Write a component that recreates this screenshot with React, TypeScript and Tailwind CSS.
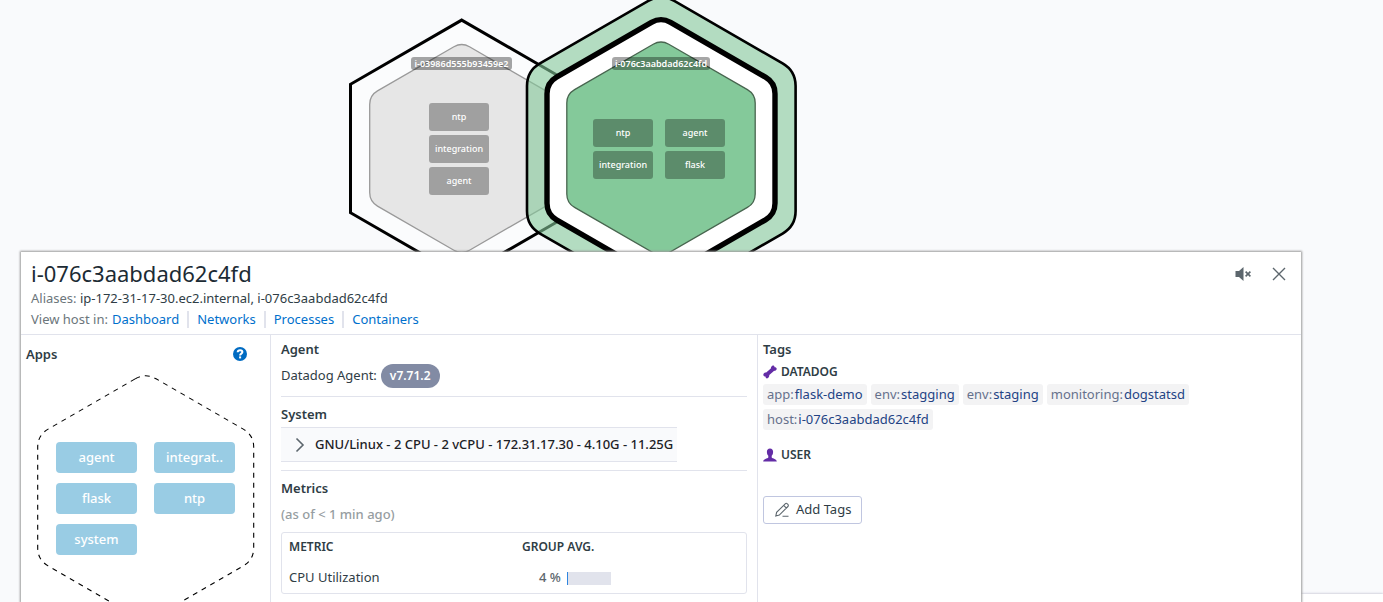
import type { ReactNode } from "react";

type Point = [number, number];

function roundedHex(cx: number, cy: number, half: number, round: number): string {
  const r = half / Math.cos(Math.PI / 6);
  const pts: Point[] = [0, 1, 2, 3, 4, 5].map((i) => {
    const a = -Math.PI / 2 + (i * Math.PI) / 3;
    return [cx + r * Math.cos(a), cy + r * Math.sin(a)];
  });
  const towards = (a: Point, b: Point): Point => {
    const t = round / r;
    return [a[0] + (b[0] - a[0]) * t, a[1] + (b[1] - a[1]) * t];
  };
  return (
    pts
      .map((p, i) => {
        const from = towards(p, pts[(i + 5) % 6]);
        const to = towards(p, pts[(i + 1) % 6]);
        return `${i === 0 ? "M" : "L"}${from[0]} ${from[1]} Q${p[0]} ${p[1]} ${to[0]} ${to[1]}`;
      })
      .join(" ") + " Z"
  );
}

function HostLabel({ children }: { children: ReactNode }) {
  return (
    <span className="rounded-[3px] bg-black/35 px-[3px] text-[9px] leading-[13px] font-semibold whitespace-nowrap text-white">
      {children}
    </span>
  );
}

function HostApp({ children }: { children: ReactNode }) {
  return (
    <button
      type="button"
      className="flex h-[28px] w-[60px] items-center justify-center rounded-[3px] bg-black/30 pb-[2px] text-[9px] leading-none font-medium text-white"
    >
      {children}
    </button>
  );
}

function HostMap() {
  return (
    <section aria-label="Host map" className="relative h-[252px] shrink-0 overflow-hidden">
      <svg className="absolute top-0 left-0" width="900" height="252" aria-hidden="true">
        <path d={roundedHex(461.7, 148.5, 111.2, 0)} fill="#fff" fillOpacity="0.35" stroke="#000" strokeWidth="3" />
        <path d={roundedHex(461.7, 148.5, 92, 9)} fill="#e6e6e6" stroke="#999" strokeWidth="1.3" />
        <path d={roundedHex(661.3, 148.5, 134.3, 15)} fill="#84c899" fillOpacity="0.6" />
        <path d={roundedHex(661.3, 148.5, 134.3, 15)} fill="none" stroke="#000" strokeWidth="2.6" />
        <path d={roundedHex(661, 148.5, 114, 11)} fill="#fff" stroke="#000" strokeWidth="5.4" />
        <path d={roundedHex(661, 148.5, 94.2, 9)} fill="#84c99a" stroke="#48654f" strokeWidth="1.3" />
      </svg>
      <div className="absolute top-[57px] left-[411px] flex w-[101px] justify-center">
        <HostLabel>i-03986d555b93459e2</HostLabel>
      </div>
      <div className="absolute top-[103px] left-[429px] grid gap-1">
        <HostApp>ntp</HostApp>
        <HostApp>integration</HostApp>
        <HostApp>agent</HostApp>
      </div>
      <div className="absolute top-[57px] left-[611px] flex w-[100px] justify-center">
        <HostLabel>i-076c3aabdad62c4fd</HostLabel>
      </div>
      <div className="absolute top-[119px] left-[593px] grid grid-cols-2 gap-x-3 gap-y-1">
        <HostApp>ntp</HostApp>
        <HostApp>agent</HostApp>
        <HostApp>integration</HostApp>
        <HostApp>flask</HostApp>
      </div>
    </section>
  );
}

function PanelHeader() {
  const links = ["Dashboard", "Networks", "Processes", "Containers"];
  return (
    <header className="flex items-start justify-between border-b border-[#e1e3ec] pt-[5px] pr-[14px] pb-[6px] pl-[10px]">
      <div>
        <h1 className="text-[22px] leading-[32px] text-[#1c2b34]">i-076c3aabdad62c4fd</h1>
        <p className="leading-[18px] text-[#2f3d45]">
          <span className="text-[#6c767b]">Aliases:</span> ip-172-31-17-30.ec2.internal, i-076c3aabdad62c4fd
        </p>
        <nav aria-label="View host in" className="mt-[3px] flex items-center leading-[18px]">
          <span className="mr-[4px] text-[#6c767b]">View host in:</span>
          {links.map((name, i) => (
            <span key={name} className="flex items-center">
              {i > 0 && <span className="mx-[8px] h-[17px] w-[2px] bg-[#e1e3ec]" />}
              <a href="#" className="text-[#0070cc]">
                {name}
              </a>
            </span>
          ))}
        </nav>
      </div>
      <div className="mt-[9px] flex items-center gap-[19px] text-[#5c666d]">
        <button type="button" aria-label="Mute host">
          <svg width="17" height="16" viewBox="0 0 17 16" fill="currentColor">
            <path d="M0.5 5H4L8.5 1V15L4 11H0.5Z" />
            <path d="M10.6 5.6L15.4 10.4M15.4 5.6L10.6 10.4" stroke="currentColor" strokeWidth="1.6" />
          </svg>
        </button>
        <button type="button" aria-label="Close panel">
          <svg width="16" height="16" viewBox="0 0 16 16" fill="none" stroke="currentColor" strokeWidth="1.4">
            <path d="M2 2L14 14M14 2L2 14" />
          </svg>
        </button>
      </div>
    </header>
  );
}

function AppsColumn() {
  const apps = ["agent", "integrat..", "flask", "ntp", "system"];
  return (
    <section className="w-[250px] shrink-0 border-r border-[#e1e3ec] pt-[9px]">
      <div className="flex items-center justify-between pr-[23px] pl-[5px]">
        <h2 className="leading-5 font-semibold">Apps</h2>
        <button
          type="button"
          aria-label="Help"
          className="flex size-[14px] items-center justify-center rounded-full bg-[#006bc2] text-white"
        >
          <svg width="14" height="14" viewBox="0 0 14 14" fill="none">
            <path
              d="M4.7 5.3C4.7 3.9 5.7 3.2 7.1 3.2C8.5 3.2 9.4 4 9.4 5.1C9.4 6.7 7.1 6.6 7.1 8.5"
              stroke="currentColor"
              strokeWidth="2"
            />
            <rect x="6.1" y="9.4" width="2" height="2" fill="currentColor" />
          </svg>
        </button>
      </div>
      <div className="mt-[6px] grid">
        <svg className="[grid-area:1/1]" width="249" height="256" aria-hidden="true">
          <path
            d={roundedHex(124.7, 127.5, 108, 12)}
            fill="none"
            stroke="#000"
            strokeWidth="1.1"
            strokeDasharray="5 5"
          />
        </svg>
        <div className="mt-[72px] ml-[35px] grid grid-cols-[81px_81px] content-start gap-x-[17px] gap-y-[10px] [grid-area:1/1]">
          {apps.map((app) => (
            <button
              key={app}
              type="button"
              className="h-[31px] rounded-[4px] bg-[#99cce4] pb-[2px] text-center leading-5 font-medium text-white"
            >
              {app}
            </button>
          ))}
        </div>
      </div>
    </section>
  );
}

function DetailsColumn() {
  return (
    <div className="w-[487px] shrink-0 border-r border-[#e1e3ec] px-[10px] pt-[4px]">
      <section className="border-b border-[#e1e3ec] pb-[8px]">
        <h2 className="leading-5 font-semibold">Agent</h2>
        <p className="mt-[5px] flex items-center gap-[4px]">
          Datadog Agent:
          <span className="rounded-full bg-[#828ba4] px-[9px] text-[12px] leading-6 font-semibold text-white">
            v7.71.2
          </span>
        </p>
      </section>
      <section className="border-b border-[#e1e3ec] pt-[7px] pb-[8px]">
        <h2 className="leading-5 font-semibold">System</h2>
        <button
          type="button"
          aria-expanded="false"
          className="mt-[3px] flex h-[35px] items-center gap-[8px] border-y border-[#e1e3ec] bg-[#f9fafc] pr-[4px] pl-[13px] font-medium text-[#1c2126]"
        >
          <svg width="13" height="16" viewBox="0 0 13 16" fill="none" stroke="#5c666d" strokeWidth="1.6">
            <path d="M2.5 1.5L9 8L2.5 14.5" />
          </svg>
          GNU/Linux - 2 CPU - 2 vCPU - 172.31.17.30 - 4.10G - 11.25G
        </button>
      </section>
      <section className="pt-[7px]">
        <h2 className="leading-5 font-semibold">Metrics</h2>
        <p className="mt-[6px] leading-5 font-medium text-[#969da1]">(as of &lt; 1 min ago)</p>
        <div className="mt-[8px] rounded-[3px] border border-[#e1e3ec]">
          <table className="w-full table-fixed text-left">
            <thead>
              <tr className="h-[28px] text-[12px]">
                <th scope="col" className="w-1/2 pl-[7px] font-semibold">
                  METRIC
                </th>
                <th scope="col" className="pl-[8px] font-semibold">
                  GROUP AVG.
                </th>
              </tr>
            </thead>
            <tbody>
              <tr className="h-[32px]">
                <td className="pt-[2px] pl-[7px]">CPU Utilization</td>
                <td className="pt-[2px]">
                  <div className="flex items-center gap-[6px] pl-[25px] font-medium text-[#5c666d]">
                    4 %
                    <span className="flex h-[13px] w-[44px] bg-[#e1e3ec]">
                      <span className="w-px bg-[#2f86e0]" />
                    </span>
                  </div>
                </td>
              </tr>
            </tbody>
          </table>
        </div>
      </section>
    </div>
  );
}

function Tag({ name, value }: { name: string; value: string }) {
  return (
    <a href="#" className="flex gap-px rounded-[3px] bg-[#f3f3f4] px-[4px] leading-[21px] text-[#234384]">
      <span className="text-[#66718c]">{name}:</span>
      {value}
    </a>
  );
}

function TagsColumn() {
  return (
    <section className="min-w-0 flex-1 px-[5px] pt-[4px]">
      <h2 className="leading-5 font-semibold">Tags</h2>
      <h3 className="mt-[3px] flex items-center gap-[4px] text-[12px] leading-5 font-semibold">
        <svg width="14" height="14" viewBox="0 0 14 14" fill="#632ca6" aria-hidden="true">
          <path d="M3.2 7.6L7.8 3.4C8 2 8.8 0.5 10 0.5C11 0.5 11.5 1.2 11.6 2.2C12.8 2.2 13.8 2.8 13.7 4C13.6 5.2 12.2 5.9 10.9 6L6.3 10.1C6.4 11.6 5.4 13.4 4 13.4C3 13.4 2.5 12.6 2.5 11.6C1.3 11.4 0.3 10.8 0.3 9.7C0.4 8.2 1.8 7.6 3.2 7.6Z" />
        </svg>
        DATADOG
      </h3>
      <div className="mt-[2px] flex max-w-[480px] flex-wrap gap-[4px]">
        <Tag name="app" value="flask-demo" />
        <Tag name="env" value="stagging" />
        <Tag name="env" value="staging" />
        <Tag name="monitoring" value="dogstatsd" />
        <Tag name="host" value="i-076c3aabdad62c4fd" />
      </div>
      <h3 className="mt-[15px] flex items-center gap-[4px] text-[12px] leading-5 font-semibold">
        <svg width="14" height="14" viewBox="0 0 14 14" fill="#632ca6" aria-hidden="true">
          <path d="M7 0.4C9 0.4 10.1 1.7 10.1 3.7C10.1 5.5 9.6 6.9 8.7 7.8V9.4C9.6 10.6 13.8 10.8 13.8 13.4H0.2C0.2 10.8 4.4 10.6 5.3 9.4V7.8C4.4 6.9 3.9 5.5 3.9 3.7C3.9 1.7 5 0.4 7 0.4Z" />
        </svg>
        USER
      </h3>
      <button
        type="button"
        className="mt-[31px] flex h-[28px] items-center gap-[6px] rounded-[3px] border border-[#c0c6e0] px-[10px]"
      >
        <svg width="16" height="16" viewBox="0 0 16 16" fill="none" stroke="#5c666d" strokeWidth="1.1">
          <path d="M1.8 14L2.6 10.4L11.2 1.8C11.8 1.2 12.7 1.2 13.3 1.8L13.9 2.4C14.5 3 14.5 3.9 13.9 4.5L5.3 13.1L1.8 14ZM9.7 3.4L12.4 6.1M8.5 14.3H14.5" />
        </svg>
        Add Tags
      </button>
    </section>
  );
}

export default function App() {
  return (
    <main className="relative flex h-screen flex-col overflow-hidden bg-[#f9fafc] font-['Noto_Sans',sans-serif] text-[13px] text-[#2f3d45]">
      <HostMap />
      <div className="absolute right-0 bottom-0 h-[8px] w-[82px] bg-white shadow-[0_-1px_2px_#d5d5e0]" />
      <article className="relative mr-[82px] ml-[21px] flex min-h-0 flex-1 flex-col bg-white shadow-[0_0_2px_1px_#9a9a9a]">
        <PanelHeader />
        <div className="flex min-h-0 flex-1">
          <AppsColumn />
          <DetailsColumn />
          <TagsColumn />
        </div>
      </article>
    </main>
  );
}
